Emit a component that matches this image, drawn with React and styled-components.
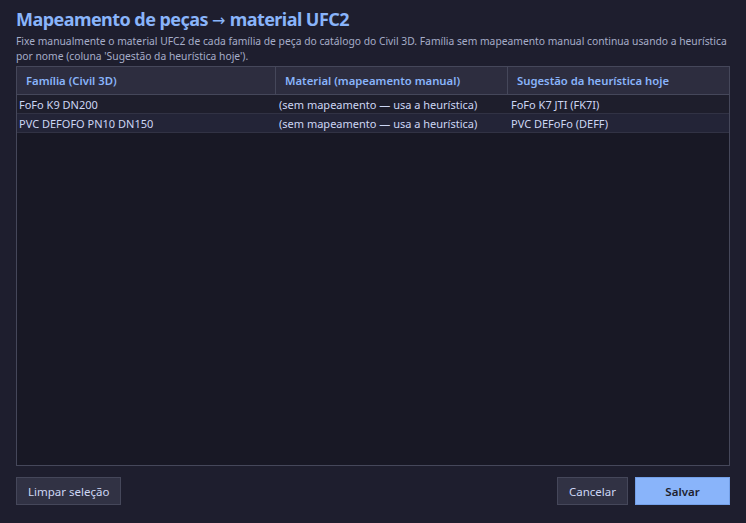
import React, { useState } from "react";
import styled, { createGlobalStyle } from "styled-components";

const GlobalStyle = createGlobalStyle`
  html, body, #root {
    margin: 0;
    height: 100%;
  }
  body {
    background: #1e1e2e;
    color: #cdd6f4;
    font-family: "Noto Sans", "Open Sans", sans-serif;
  }
`;

const familias = [
  { nome: "FoFo K9 DN200", material: "", sugestao: "FoFo K7 JTI (FK7I)" },
  { nome: "PVC DEFOFO PN10 DN150", material: "", sugestao: "PVC DEFoFo (DEFF)" },
];

const SEM_MAPEAMENTO = "(sem mapeamento — usa a heurística)";

const Window = styled.div`
  display: flex;
  flex-direction: column;
  height: 100vh;
  box-sizing: border-box;
  padding: 6px 16px 18px 16px;
`;

const Title = styled.h1`
  margin: 0;
  height: 26px;
  font-size: 18px;
  letter-spacing: -0.55px;
  font-weight: 700;
  color: #89b4fa;
  line-height: 26px;
`;

const Arrow = styled.span`
  font-family: "DejaVu Sans", sans-serif;
  font-weight: 400;
  font-size: 16px;
  line-height: 1;
  letter-spacing: 0;
`;

const Description = styled.p`
  margin: 2px 0 3px 0;
  font-size: 10.3px;
  line-height: 14.5px;
  color: #a6adc8;
`;

const Table = styled.div`
  flex: 1;
  display: flex;
  flex-direction: column;
  background: #181825;
  border: 1px solid #45475a;
  min-height: 0;
`;

const Row = styled.div`
  display: grid;
  grid-template-columns: 259px 232px 1fr;
  background: ${(p) => (p.$alt ? "#232437" : "#1e1e2c")};
  border-bottom: 1px solid #313244;
  cursor: default;
  &:hover {
    background: #2a2b40;
  }
`;

const HeaderRow = styled.div`
  display: grid;
  grid-template-columns: 259px 232px 1fr;
  background: #2d2d3f;
  border-bottom: 1px solid #45475a;
`;

const HeaderCell = styled.div`
  height: 27px;
  display: flex;
  align-items: center;
  padding-left: 9px;
  font-size: 11.3px;
  font-weight: 600;
  color: #89b4fa;
  border-right: ${(p) => (p.$last ? "none" : "1px solid #45475a")};
`;

const Cell = styled.div`
  height: 18px;
  display: flex;
  align-items: center;
  padding-left: ${(p) => p.$pad || 2}px;
  font-size: 11px;
  color: #cdd6f4;
  white-space: nowrap;
  overflow: hidden;
`;

const Footer = styled.div`
  display: flex;
  align-items: center;
  gap: 7px;
  margin-top: 11px;
`;

const Spacer = styled.div`
  flex: 1;
`;

const Button = styled.button`
  height: 28px;
  min-width: ${(p) => (p.$primary ? "95px" : "auto")};
  padding: 0 11px;
  font-family: inherit;
  font-size: 11.5px;
  font-weight: ${(p) => (p.$primary ? 600 : 400)};
  background: ${(p) => (p.$primary ? "#89b4fa" : "#313244")};
  color: ${(p) => (p.$primary ? "#1e1e2e" : "#cdd6f4")};
  border: 1px solid ${(p) => (p.$primary ? "#74a0e8" : "#45475a")};
  border-radius: 0;
  cursor: pointer;
  &:hover {
    background: ${(p) => (p.$primary ? "#9cc0fb" : "#3a3b50")};
  }
`;

const App = () => {
  const [rows, setRows] = useState(familias);

  const limpar = () => {
    setRows(rows.map((r) => ({ ...r, material: "" })));
  };

  return (
    <Window>
      <GlobalStyle />
      <Title>
        Mapeamento de peças <Arrow>→</Arrow> material UFC2
      </Title>
      <Description>
        Fixe manualmente o material UFC2 de cada família de peça do catálogo do Civil 3D. Família sem mapeamento manual continua usando a heurística por nome (coluna 'Sugestão da heurística hoje').
      </Description>
      <Table>
        <HeaderRow>
          <HeaderCell>Família (Civil 3D)</HeaderCell>
          <HeaderCell>Material (mapeamento manual)</HeaderCell>
          <HeaderCell $last>Sugestão da heurística hoje</HeaderCell>
        </HeaderRow>
        {rows.map((r, i) => (
          <Row key={r.nome} $alt={i % 2 === 1}>
            <Cell>{r.nome}</Cell>
            <Cell $pad={3}>{r.material || SEM_MAPEAMENTO}</Cell>
            <Cell $pad={3}>{r.sugestao}</Cell>
          </Row>
        ))}
      </Table>
      <Footer>
        <Button onClick={limpar}>Limpar seleção</Button>
        <Spacer />
        <Button>Cancelar</Button>
        <Button $primary>Salvar</Button>
      </Footer>
    </Window>
  );
};

export default App;
